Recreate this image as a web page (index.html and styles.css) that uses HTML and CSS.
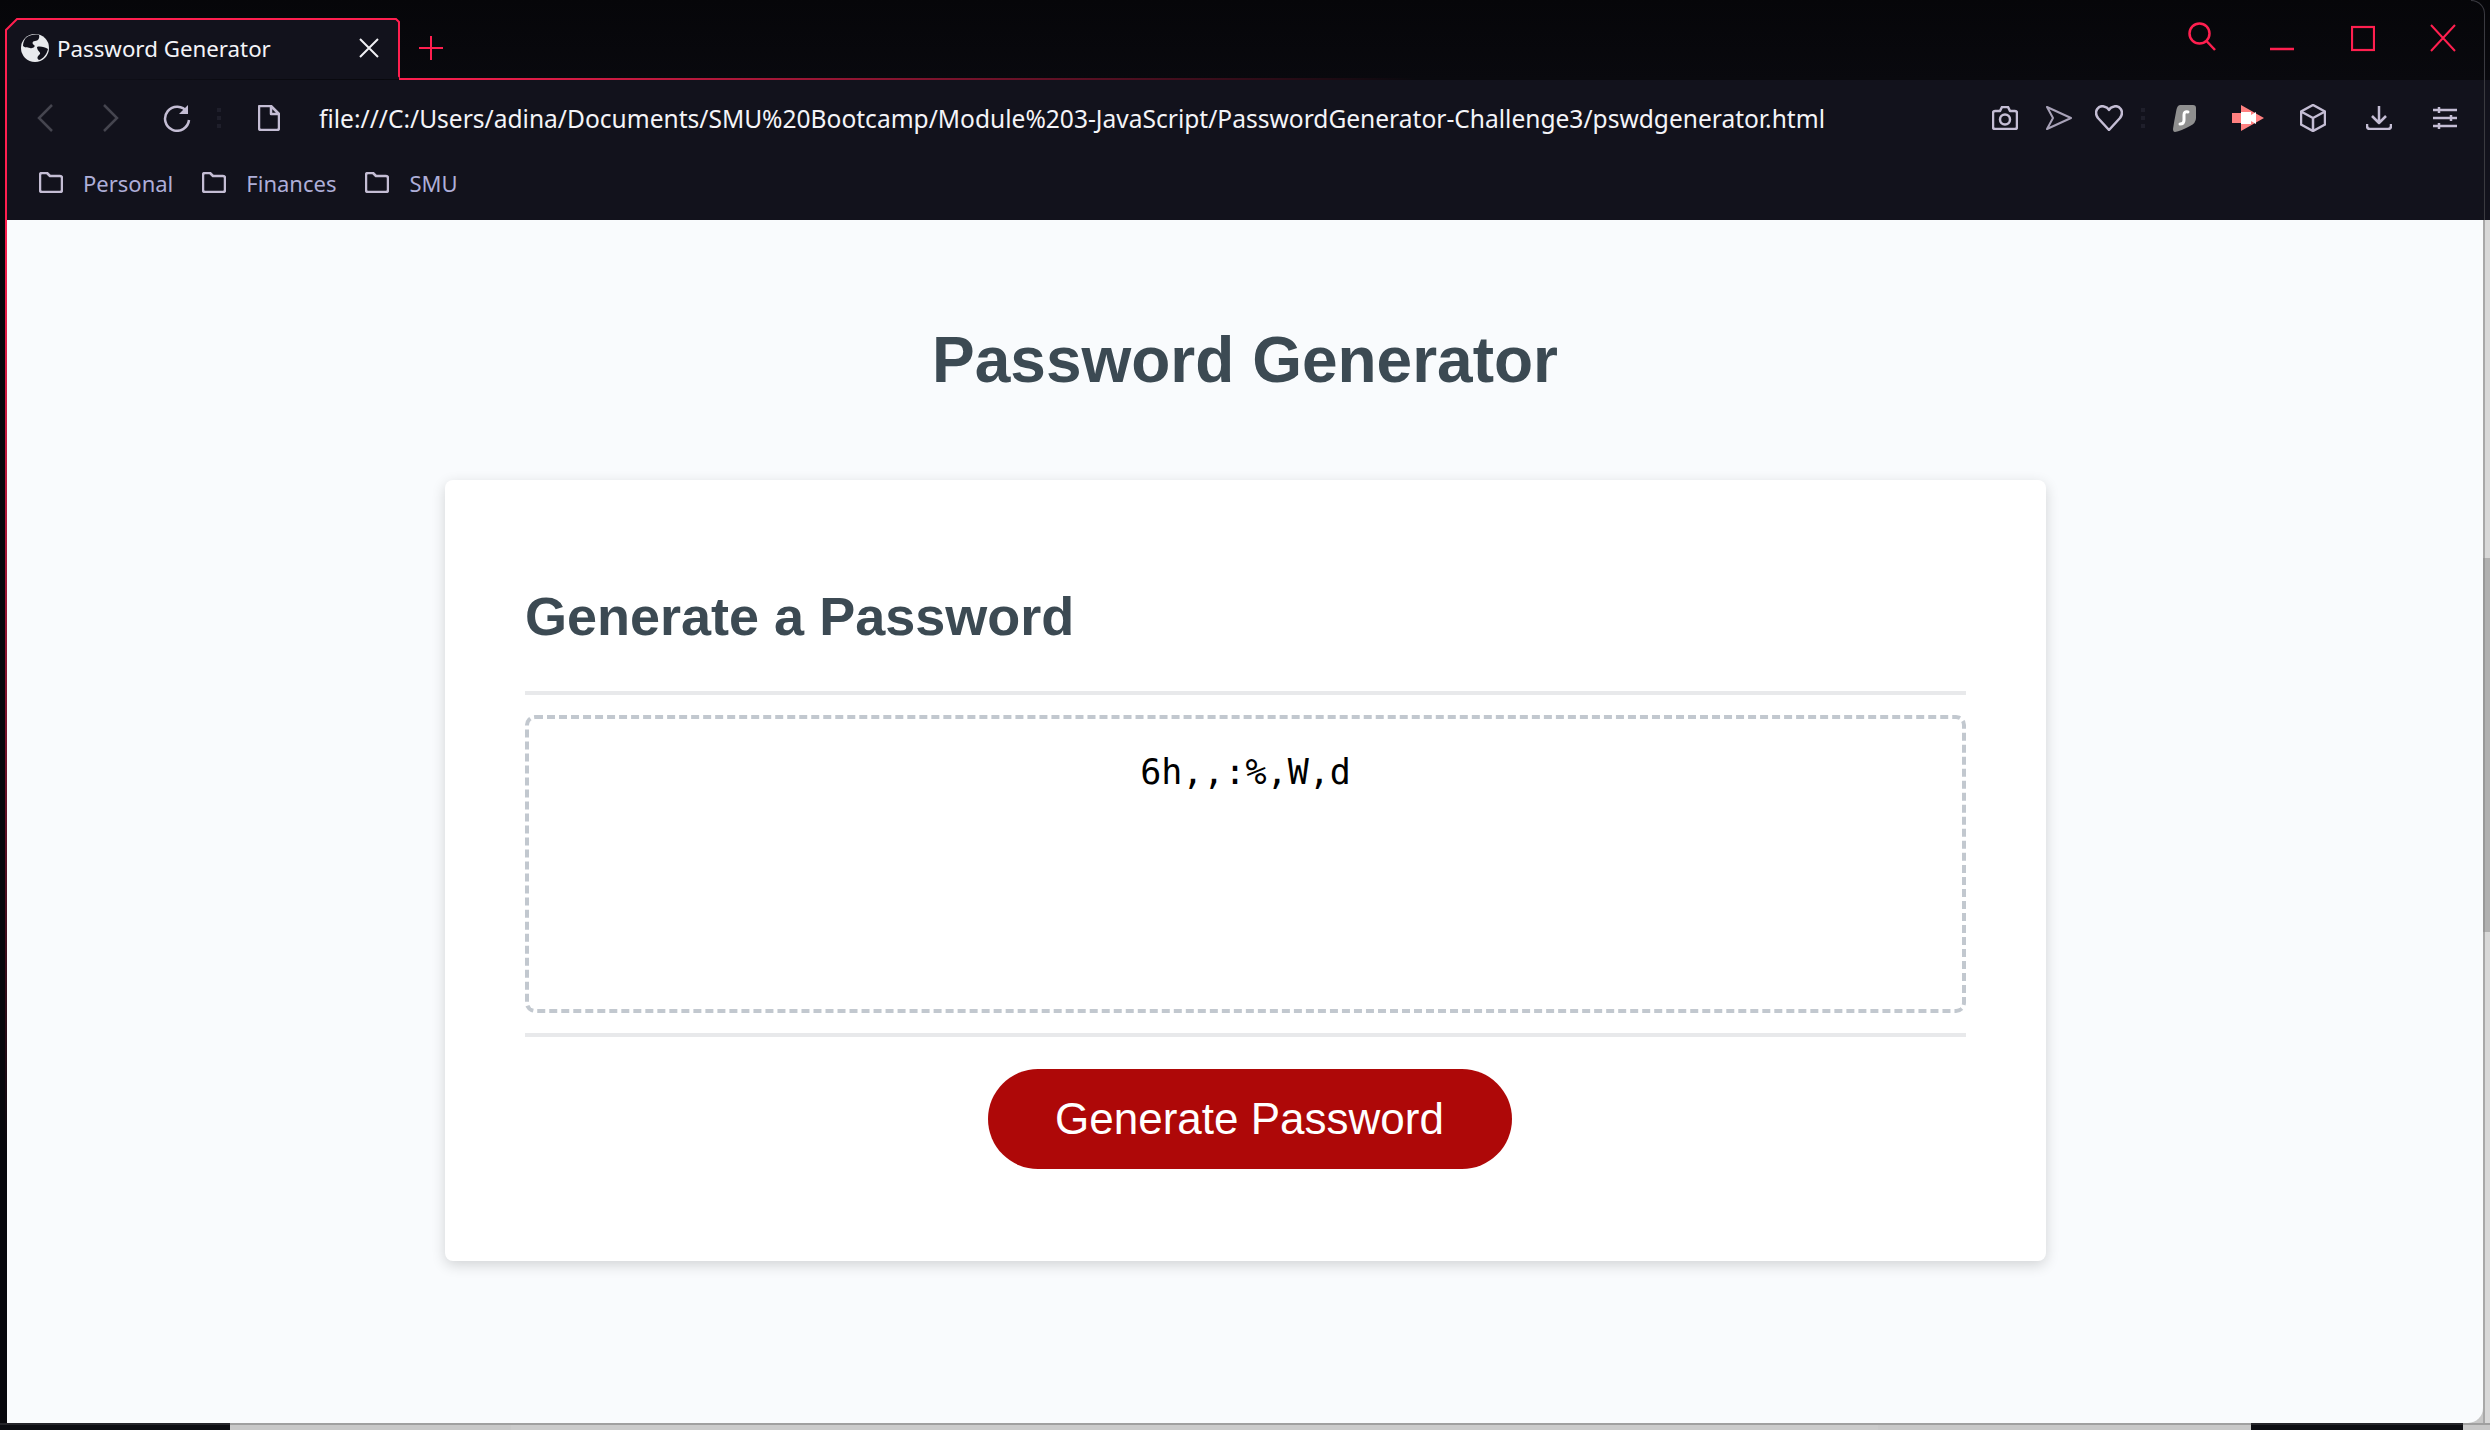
FILE: index.html
```html
<!DOCTYPE html>
<html>
<head>
    <meta charset="UTF-8">
    <title>Password Generator</title>
    <link rel="stylesheet" href="styles.css">
</head>
<body>
<div class="browser">
    <div class="titlebar">
        <div class="tab">
            <svg class="tab-shape" width="395" height="62" viewBox="0 0 395 62">
                <path d="M1 62V12L12 1H391L394 4V58L397 61" fill="#12121c" stroke="#ff1f4f" stroke-width="2"/>
            </svg>
            <svg class="tab-globe" width="28" height="28" viewBox="0 0 28 28">
                <circle cx="14" cy="14" r="14" fill="#e8eaed"/>
                <path d="M6 3C9 1 14 0 18 1C19 4 17 7 14 7C11 7 11 10 13 11C15 12 12 15 9 14C6 13 4 14 2 12C2 9 3 5 6 3Z" fill="#12121c"/>
                <path d="M16 13C19 12 24 13 27 15C26 20 22 25 18 26C15 24 17 22 19 20C20 18 16 17 16 13Z" fill="#12121c"/>
            </svg>
            <span class="tab-title">Password Generator</span>
            <svg class="tab-close" width="20" height="20" viewBox="0 0 20 20">
                <path d="M1 1L19 19M19 1L1 19" stroke="#f0f0f4" stroke-width="2"/>
            </svg>
        </div>
        <div class="tab-rest">
            <svg class="new-tab" width="24" height="24" viewBox="0 0 24 24">
                <path d="M12 0V24M0 12H24" stroke="#ff1f4f" stroke-width="2"/>
            </svg>
        </div>
        <div class="window-controls">
            <svg class="control" width="28" height="30" viewBox="0 0 28 30">
                <circle cx="11.5" cy="11.5" r="10" fill="none" stroke="#ff1f4f" stroke-width="2.5"/>
                <path d="M18.5 19L27 28" stroke="#ff1f4f" stroke-width="2.5"/>
            </svg>
            <svg class="control control-min" width="24" height="30" viewBox="0 0 24 30">
                <path d="M0 27H24" stroke="#ff1f4f" stroke-width="2.5"/>
            </svg>
            <svg class="control control-max" width="24" height="30" viewBox="0 0 24 30">
                <rect x="1" y="5" width="22" height="23" fill="none" stroke="#ff1f4f" stroke-width="2.2"/>
            </svg>
            <svg class="control control-close" width="26" height="30" viewBox="0 0 26 30">
                <path d="M1 3L25 29M25 3L1 29" stroke="#ff1f4f" stroke-width="2"/>
            </svg>
        </div>
    </div>

    <div class="frame">
        <div class="toolbar">
            <div class="tool"><svg width="16" height="28" viewBox="0 0 16 28"><path d="M15 1L2 14L15 27" class="stroke-dim"/></svg></div>
            <div class="tool"><svg width="16" height="28" viewBox="0 0 16 28"><path d="M1 1L14 14L1 27" class="stroke-dim"/></svg></div>
            <div class="tool">
                <svg width="28" height="28" viewBox="0 0 28 28">
                    <path d="M24 8A12 12 0 1 0 26 16" class="stroke-icon"/>
                    <path d="M25 1V10H16Z" fill="#c4bdd4"/>
                </svg>
            </div>
            <div class="dots dots-left"><i></i><i></i><i></i></div>
            <div class="tool tool-file">
                <svg width="22" height="26" viewBox="0 0 22 26">
                    <path d="M2 1H13L21 9V23Q21 25 19 25H3Q1 25 1 23V2Q1 1 2 1ZM13 1V9H21" class="stroke-icon"/>
                </svg>
            </div>
            <div class="url">file:///C:/Users/adina/Documents/SMU%20Bootcamp/Module%203-JavaScript/PasswordGenerator-Challenge3/pswdgenerator.html</div>
            <div class="tool tool-54">
                <svg width="26" height="24" viewBox="0 0 26 24">
                    <path d="M3 5H8L10 1H16L18 5H23Q25 5 25 7V21Q25 23 23 23H3Q1 23 1 21V7Q1 5 3 5Z" class="stroke-icon"/>
                    <circle cx="13" cy="13.5" r="5" class="stroke-icon"/>
                </svg>
            </div>
            <div class="tool tool-54">
                <svg width="26" height="24" viewBox="0 0 26 24">
                    <path d="M1 1L25 12L1 23L7 12Z" class="stroke-thin"/>
                </svg>
            </div>
            <div class="tool tool-46">
                <svg width="28" height="26" viewBox="0 0 28 26">
                    <path d="M14 25L3 13C-2 6 4 0 9 1.500C11 2 13 3 14 5C15 3 17 2 19 1.500C24 0 30 6 25 13Z" class="stroke-icon"/>
                </svg>
            </div>
            <div class="dots dots-right"><i></i><i></i><i></i></div>
            <div class="tool tool-62">
                <svg width="24" height="28" viewBox="0 0 24 28">
                    <path d="M7 1H20Q23 1 23 4V14Q23 19 17 22Q8 27 2 28Q0 28 0 25Q1 18 3 8Q4 1 7 1Z" fill="#8f8f8f"/>
                    <path d="M15 8Q11 7 11 11L11 16Q11 20 7 20" fill="none" stroke="#fff" stroke-width="3" stroke-linecap="round"/>
                </svg>
            </div>
            <div class="tool tool-64">
                <svg width="32" height="26" viewBox="0 0 32 26">
                    <path d="M0 8H9V0L32 13L9 26V18H0Z" fill="#ff8080"/>
                    <path d="M9 7H19V10L24 7V19L19 16V19H9Z" fill="#fff"/>
                </svg>
            </div>
            <div class="tool">
                <svg width="26" height="28" viewBox="0 0 26 28">
                    <path d="M13 1L25 7.500V20.500L13 27L1 20.500V7.500ZM1 7.500L13 14L25 7.500M13 14V27" class="stroke-icon"/>
                </svg>
            </div>
            <div class="tool">
                <svg width="26" height="24" viewBox="0 0 26 24">
                    <path d="M13 0V17M6 10L13 17L20 10M1 18V20Q1 23 4 23H22Q25 23 25 20V18" class="stroke-icon"/>
                </svg>
            </div>
            <div class="tool">
                <svg width="26" height="22" viewBox="0 0 26 22">
                    <path d="M1 3H25M1 11H25M1 19H25M7 0V6M19 8V14M7 16V22" class="stroke-icon"/>
                </svg>
            </div>
        </div>

        <div class="bookmarks">
            <div class="bookmark">
                <svg width="24" height="21" viewBox="0 0 24 21"><path d="M1 3Q1 1 3 1H8L11 4H21Q23 4 23 6V18Q23 20 21 20H3Q1 20 1 18Z" class="stroke-icon"/></svg>
                <span>Personal</span>
            </div>
            <div class="bookmark">
                <svg width="24" height="21" viewBox="0 0 24 21"><path d="M1 3Q1 1 3 1H8L11 4H21Q23 4 23 6V18Q23 20 21 20H3Q1 20 1 18Z" class="stroke-icon"/></svg>
                <span>Finances</span>
            </div>
            <div class="bookmark">
                <svg width="24" height="21" viewBox="0 0 24 21"><path d="M1 3Q1 1 3 1H8L11 4H21Q23 4 23 6V18Q23 20 21 20H3Q1 20 1 18Z" class="stroke-icon"/></svg>
                <span>SMU</span>
            </div>
        </div>

        <div class="viewport">
            <div class="page">
                <h1 class="page-title">Password Generator</h1>
                <div class="card">
                    <div class="card-header">
                        <h2>Generate a Password</h2>
                    </div>
                    <div class="card-body">
                        <textarea class="password" readonly>6h,,:%,W,d</textarea>
                    </div>
                    <div class="card-footer">
                        <button class="btn">Generate Password</button>
                    </div>
                </div>
            </div>
            <div class="scrollbar"><div class="thumb"></div></div>
        </div>
    </div>
    <div class="window-edge"></div>
</div>
<div class="taskbar">
    <div class="strip strip-dark strip-first"></div>
    <div class="strip strip-a"></div>
    <div class="strip strip-b"></div>
    <div class="strip strip-a strip-mid"></div>
    <div class="strip strip-dark strip-last"></div>
    <div class="strip strip-end"></div>
</div>
</body>
</html>
```

FILE: styles.css
```css
* {
    box-sizing: border-box;
}

body {
    margin: 0;
    width: 2490px;
    height: 1430px;
    overflow: hidden;
    background-color: #07070c;
    font-family: "Noto Sans", "Open Sans", sans-serif;
}

.browser {
    position: relative;
    height: 1423px;
    display: flex;
    flex-direction: column;
}

.titlebar {
    height: 80px;
    display: flex;
    flex-shrink: 0;
    background: linear-gradient(#060609, #09090e);
}

.tab {
    position: relative;
    width: 395px;
    height: 62px;
    margin-top: 18px;
    margin-left: 5px;
    padding-left: 16px;
    padding-bottom: 2px;
    display: flex;
    align-items: center;
    flex-shrink: 0;
}

.tab-shape {
    position: absolute;
    left: 0;
    top: 0;
}

.tab-globe, .tab-title, .tab-close {
    position: relative;
}

.tab-title {
    margin-left: 8px;
    font-size: 22.3px;
    color: #f4f4f8;
    white-space: nowrap;
}

.tab-close {
    margin-left: auto;
    margin-right: 21px;
}

.tab-rest {
    position: relative;
    flex: 1;
    padding-top: 36px;
    padding-left: 19px;
}

.tab-rest::after {
    content: "";
    position: absolute;
    left: -1px;
    bottom: 0;
    width: 1018px;
    height: 2px;
    background: linear-gradient(to right, #ff1f4f, rgba(255, 31, 79, 0));
}

.new-tab {
    display: block;
}

.window-controls {
    display: flex;
    align-items: flex-start;
    padding-top: 22px;
    padding-right: 34px;
}

.control-min {
    margin-left: 54px;
}

.control-max {
    margin-left: 57px;
}

.control-close {
    margin-left: 55px;
}

.frame {
    flex: 1;
    min-height: 0;
    margin-left: 5px;
    display: flex;
    flex-direction: column;
    border-left: 2px solid;
    border-image: linear-gradient(#ff1f4f 10%, rgba(255, 31, 79, 0) 80%) 1;
}

.toolbar {
    height: 76px;
    padding-left: 5px;
    padding-right: 12px;
    display: flex;
    align-items: center;
    background-color: #12121c;
}

.tool {
    width: 66px;
    display: flex;
    justify-content: center;
    flex-shrink: 0;
}

.tool-file {
    width: 82px;
}

.tool-54 {
    width: 54px;
}

.tool-46 {
    width: 46px;
}

.tool-62 {
    width: 62px;
}

.tool-64 {
    width: 64px;
}

.stroke-dim {
    fill: none;
    stroke: #45454f;
    stroke-width: 2.5;
}

.stroke-icon {
    fill: none;
    stroke: #c4bdd4;
    stroke-width: 2.5;
    stroke-linejoin: round;
}

.stroke-thin {
    fill: none;
    stroke: #a8a2b8;
    stroke-width: 2;
    stroke-linejoin: round;
}

.dots {
    display: flex;
    flex-direction: column;
    align-items: center;
    gap: 4px;
    flex-shrink: 0;
}

.dots i {
    display: block;
    width: 4px;
    height: 4px;
    background-color: #1f1f2b;
}

.dots-left {
    width: 18px;
}

.dots-right {
    width: 22px;
}

.url {
    flex: 1;
    margin-left: 9px;
    font-size: 24.55px;
    color: #f4f4f8;
    white-space: nowrap;
}

.bookmarks {
    height: 64px;
    padding-left: 32px;
    padding-bottom: 11px;
    display: flex;
    align-items: center;
    background-color: #12121c;
}

.bookmark {
    display: flex;
    align-items: center;
    margin-right: 29px;
    font-size: 22px;
    color: #aeaed8;
}

.bookmark span {
    margin-left: 20px;
}

.viewport {
    flex: 1;
    min-height: 0;
    display: flex;
    background-color: #c8c8c8;
}

.page {
    flex: 1;
    padding-top: 102px;
    border-bottom-right-radius: 15px;
    background-color: #f9fbfd;
    font-family: "Liberation Sans", Arial, sans-serif;
    color: #3c4a53;
}

.page-title {
    margin: 0 0 82px;
    font-size: 64px;
    line-height: 76px;
    font-weight: 700;
    text-align: center;
}

.card {
    width: 1601px;
    height: 781px;
    margin-left: 438px;
    padding: 0 80px;
    border-radius: 8px;
    background-color: #fff;
    box-shadow: 0 4px 14px rgba(0, 0, 0, 0.16);
}

.card-header {
    height: 215px;
    padding-top: 101px;
    border-bottom: 4px solid #e8e9eb;
}

.card-header h2 {
    margin: 0;
    font-size: 54px;
    line-height: 70px;
    font-weight: 700;
}

.card-body {
    height: 342px;
    padding-top: 20px;
    border-bottom: 4px solid #e8e9eb;
}

.password {
    display: block;
    width: 100%;
    height: 298px;
    padding: 32px;
    resize: none;
    outline: none;
    border: 4px dashed #c2c8cf;
    border-radius: 10px;
    text-align: center;
    font-family: "DejaVu Sans Mono", "Liberation Mono", monospace;
    font-size: 35px;
    line-height: 42px;
    color: #000;
}

.card-footer {
    padding-top: 32px;
    display: flex;
    justify-content: center;
}

.btn {
    width: 524px;
    height: 100px;
    margin-left: 8px;
    padding: 0;
    border: none;
    border-radius: 50px;
    background-color: #ae0808;
    color: #fff;
    font-family: "Liberation Sans", Arial, sans-serif;
    font-size: 44px;
    cursor: pointer;
}

.scrollbar {
    width: 7px;
    padding-top: 338px;
    border-left: 2px solid #a8a8a8;
    background-color: #d8d8d8;
}

.thumb {
    height: 374px;
    margin-left: -2px;
    width: 7px;
    background-color: #b0b0b0;
    border-left: 2px solid #989898;
}

.window-edge {
    position: absolute;
    top: 0;
    right: 5px;
    width: 14px;
    height: 220px;
    border-right: 1px solid #3a3a40;
    border-top: 1px solid #3a3a40;
    border-top-right-radius: 14px;
}

.taskbar {
    height: 7px;
    display: flex;
}

.strip {
    height: 7px;
    background-color: #c8c8c8;
    border-top: 2px solid #a0a0a0;
}

.strip-dark {
    background-color: #0c0d12;
    border-top-color: #25252a;
}

.strip-first {
    width: 230px;
}

.strip-a {
    width: 281px;
}

.strip-b {
    width: 1367px;
    background-color: #cbcbcb;
}

.strip-mid {
    width: 373px;
}

.strip-last {
    width: 212px;
}

.strip-end {
    flex: 1;
}
```
